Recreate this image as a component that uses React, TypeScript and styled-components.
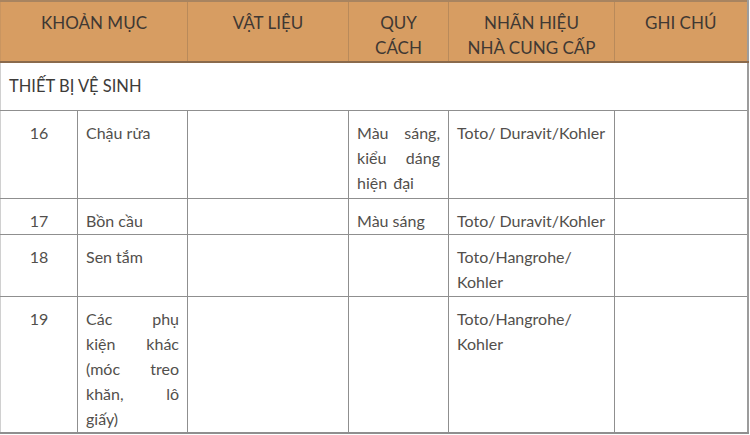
import React from "react";
import styled, { createGlobalStyle } from "styled-components";

const Global = createGlobalStyle`
  html, body { margin: 0; padding: 0; background: #ffffff; }
  body { font-family: "Lato", "Noto Sans", sans-serif; }
`;

const Table = styled.table`
  width: 747px;
  border-collapse: collapse;
  table-layout: fixed;
  font-family: "Lato", "Noto Sans", sans-serif;
  font-size: 16px;
  line-height: 25px;
  color: #524f4c;
`;

const HeadRow = styled.tr`
  height: 61px;
  background: #d79d62;
`;

const HeadCell = styled.th`
  padding: 8px 6px 0;
  vertical-align: top;
  text-align: center;
  font-weight: 400;
  font-size: 17px;
  color: #3f3833;
  border-top: 2px solid #a88460;
  border-bottom: 2px solid #8a6a4c;
  border-left: 1px solid #b98a5a;
  border-right: 1px solid #b98a5a;
  &:first-child { border-left: 1px solid #c99560; }
  &:last-child { border-right: 2px solid #9c9c9c; }
`;

const Row = styled.tr<{ $h: number }>`
  height: ${(p) => p.$h}px;
`;

const SectionCell = styled.td`
  padding: 11px 8px 0;
  vertical-align: top;
  text-align: left;
  font-size: 16.5px;
  color: #3d3b39;
  border-left: 1px solid #d0d0d0;
  border-right: 2px solid #9c9c9c;
  border-bottom: 1px solid #8f8f8f;
`;

const Cell = styled.td<{ $center?: boolean }>`
  padding: 9px 8px 0;
  vertical-align: top;
  text-align: ${(p) => (p.$center ? "center" : "left")};
  border: 1px solid #8f8f8f;
  &:first-child { border-left: 1px solid #d0d0d0; }
  &:last-child { border-right: 2px solid #9c9c9c; }
`;

const LastRow = styled(Row)`
  & > td { border-bottom: 2px solid #8f8f8f; }
`;

const JustLine = styled.div<{ $last?: boolean }>`
  display: flex;
  justify-content: ${(p) => (p.$last ? "flex-start" : "space-between")};
  gap: 6px;
`;

const Justified: React.FC<{ lines: string[][] }> = ({ lines }) => (
  <>
    {lines.map((words, i) => (
      <JustLine key={i} $last={i === lines.length - 1}>
        {words.map((w, j) => (
          <span key={j}>{w}</span>
        ))}
      </JustLine>
    ))}
  </>
);

export default function App() {
  return (
    <>
      <Global />
      <Table>
        <colgroup>
          <col style={{ width: 77 }} />
          <col style={{ width: 110 }} />
          <col style={{ width: 161 }} />
          <col style={{ width: 100 }} />
          <col style={{ width: 166 }} />
          <col style={{ width: 133 }} />
        </colgroup>
        <thead>
          <HeadRow>
            <HeadCell colSpan={2}>KHOẢN MỤC</HeadCell>
            <HeadCell>VẬT LIỆU</HeadCell>
            <HeadCell>
              QUY
              <br />
              CÁCH
            </HeadCell>
            <HeadCell>
              NHÃN HIỆU
              <br />
              NHÀ CUNG CẤP
            </HeadCell>
            <HeadCell>GHI CHÚ</HeadCell>
          </HeadRow>
        </thead>
        <tbody>
          <Row $h={48}>
            <SectionCell colSpan={6}>THIẾT BỊ VỆ SINH</SectionCell>
          </Row>
          <Row $h={88}>
            <Cell $center>16</Cell>
            <Cell>Chậu rửa</Cell>
            <Cell />
            <Cell>
              <Justified
                lines={[
                  ["Màu", "sáng,"],
                  ["kiểu", "dáng"],
                  ["hiện", "đại"],
                ]}
              />
            </Cell>
            <Cell>Toto/ Duravit/Kohler</Cell>
            <Cell />
          </Row>
          <Row $h={36}>
            <Cell $center>17</Cell>
            <Cell>Bồn cầu</Cell>
            <Cell />
            <Cell>Màu sáng</Cell>
            <Cell>Toto/ Duravit/Kohler</Cell>
            <Cell />
          </Row>
          <Row $h={62}>
            <Cell $center>18</Cell>
            <Cell>Sen tắm</Cell>
            <Cell />
            <Cell />
            <Cell>
              Toto/Hangrohe/
              <br />
              Kohler
            </Cell>
            <Cell />
          </Row>
          <LastRow $h={137}>
            <Cell $center>19</Cell>
            <Cell>
              <Justified
                lines={[
                  ["Các", "phụ"],
                  ["kiện", "khác"],
                  ["(móc", "treo"],
                  ["khăn,", "lô"],
                  ["giấy)"],
                ]}
              />
            </Cell>
            <Cell />
            <Cell />
            <Cell>
              Toto/Hangrohe/
              <br />
              Kohler
            </Cell>
            <Cell />
          </LastRow>
        </tbody>
      </Table>
    </>
  );
}
